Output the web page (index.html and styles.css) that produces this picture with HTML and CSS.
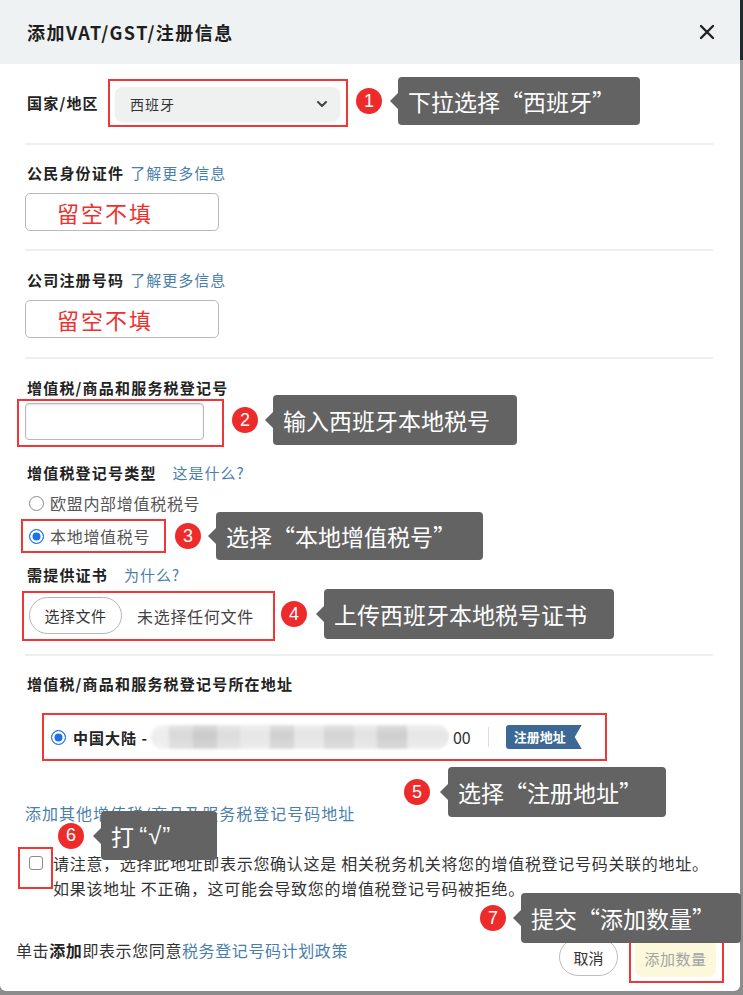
FILE: index.html
```html
<!DOCTYPE html>
<html lang="zh-CN">
<head>
<meta charset="utf-8">
<title>添加VAT/GST/注册信息</title>
<link rel="stylesheet" href="styles.css">
</head>
<body>
<div class="modal">
  <header class="modal-head">
    <h1 class="title">添加VAT/GST/注册信息</h1>
    <svg class="close" viewBox="0 0 16 16" aria-label="关闭"><path d="M2 2 L14 14 M14 2 L2 14" /></svg>
  </header>

  <div class="modal-body">
    <div class="country-row">
      <span class="label country-label">国家/地区</span>
      <div class="mark mark-select">
        <div class="select">
          <span>西班牙</span>
          <svg class="chevron" viewBox="0 0 10 6"><path d="M1 1 L5 5 L9 1" /></svg>
        </div>
      </div>
    </div>

    <div class="divider d1"></div>

    <div class="label-line m18"><span class="label">公民身份证件</span><a class="link near">了解更多信息</a></div>
    <div class="input-box"><span class="hint">留空不填</span></div>

    <div class="divider d2"></div>

    <div class="label-line m19"><span class="label">公司注册号码</span><a class="link near">了解更多信息</a></div>
    <div class="input-box"><span class="hint">留空不填</span></div>

    <div class="divider d3"></div>

    <div class="label-line m19"><span class="label">增值税/商品和服务税登记号</span></div>
    <div class="mark mark-vat"><div class="vat-input"></div></div>

    <div class="label-line m16"><span class="label">增值税登记号类型</span><a class="link far">这是什么?</a></div>
    <div class="radio-row first"><span class="radio"></span><span class="radio-text">欧盟内部增值税税号</span></div>
    <div class="mark mark-radio">
      <div class="radio-row"><span class="radio checked"></span><span class="radio-text">本地增值税号</span></div>
    </div>

    <div class="label-line m12"><span class="label">需提供证书</span><a class="link far">为什么?</a></div>
    <div class="mark mark-file">
      <span class="file-btn">选择文件</span>
      <span class="file-text">未选择任何文件</span>
    </div>

    <div class="divider d4"></div>

    <div class="label-line m18"><span class="label">增值税/商品和服务税登记号所在地址</span></div>
    <div class="mark mark-addr">
      <span class="radio checked"></span>
      <span class="addr-name">中国大陆 -</span>
      <span class="blur"></span>
      <span class="addr-tail">00</span>
      <span class="sep"></span>
      <span class="tag">注册地址</span>
    </div>

    <a class="link add-link">添加其他增值税/商品及服务税登记号码地址</a>

    <div class="notice">
      <span class="checkbox"></span>
      <span class="mark-check"></span>
      <p class="notice-text">请注意，选择此地址即表示您确认这是 相关税务机关将您的增值税登记号码关联的地址。<br>如果该地址 不正确，这可能会导致您的增值税登记号码被拒绝。</p>
    </div>
  </div>

  <footer class="modal-foot">
    <p class="foot-text">单击<b>添加</b>即表示您同意<a class="link foot-link">税务登记号码计划政策</a></p>
    <div class="actions">
      <span class="btn-cancel">取消</span>
      <div class="mark mark-add"><span class="btn-add">添加数量</span></div>
    </div>
  </footer>

  <div class="note n1"><span class="num">1</span><span class="tip">下拉选择“西班牙”</span></div>
  <div class="note n2"><span class="num">2</span><span class="tip">输入西班牙本地税号</span></div>
  <div class="note n3"><span class="num">3</span><span class="tip">选择“本地增值税号”</span></div>
  <div class="note n4"><span class="num">4</span><span class="tip">上传西班牙本地税号证书</span></div>
  <div class="note n5"><span class="num">5</span><span class="tip">选择“注册地址”</span></div>
  <div class="note n6"><span class="num">6</span><span class="tip">打 <span class="latin">“√”</span></span></div>
  <div class="note n7"><span class="num">7</span><span class="tip">提交“添加数量”</span></div>
</div>
</body>
</html>
```

FILE: styles.css
```css
* { box-sizing: border-box; }
html, body { margin: 0; padding: 0; }
body {
  height: 995px;
  overflow: hidden;
  background: linear-gradient(#1f2a2d 0, #1f2a2d 60px, #8c8c8c 60px);
  font-family: "Noto Sans CJK SC", "Noto Sans", sans-serif;
  color: #333;
}
.modal {
  position: relative;
  width: 740px;
  height: 991px;
  background: #fff;
  border-radius: 0 0 6px 6px;
}
.modal-head {
  height: 64px;
  background: #eff2f3;
  display: flex;
  align-items: center;
  justify-content: space-between;
  padding: 0 25px 0 27px;
}
.title {
  margin: 0;
  font-size: 18px;
  font-weight: 700;
  letter-spacing: 1.5px;
  line-height: 24px;
  color: #1e1e1e;
}
.close { width: 16px; height: 16px; }
.close path { stroke: #222; stroke-width: 2.4; stroke-linecap: round; fill: none; }

.modal-body { padding: 15px 27px 0 25px; }

.label {
  font-size: 15px;
  font-weight: 700;
  letter-spacing: 1.2px;
  line-height: 20px;
  color: #222;
}
.link {
  color: #4b7fab;
  font-size: 15px;
  letter-spacing: 1px;
  line-height: 20px;
}
.link.near { margin-left: 6px; }
.link.far { margin-left: 16px; }

.mark { border: 2px solid #f03737; }

.country-row { display: flex; align-items: center; height: 48px; }
.country-label { margin-left: 2px; width: 81px; flex: none; }
.mark-select { padding: 6px 6px 4px 5px; }
.select {
  width: 225px;
  height: 34px;
  border-radius: 8px;
  background: #eff1f1;
  box-shadow: 0 1px 2px rgba(0,0,0,0.08);
  display: flex;
  align-items: center;
  justify-content: space-between;
  padding: 0 13px 0 15px;
  font-size: 14px;
  letter-spacing: 1px;
  color: #333;
}
.chevron { width: 10px; height: 6px; }
.chevron path { stroke: #444; stroke-width: 2; fill: none; stroke-linecap: round; stroke-linejoin: round; }

.divider { height: 2px; background: #edefef; }
.d1 { margin-top: 16px; }
.d2 { margin-top: 18px; }
.d3 { margin-top: 19px; }
.d4 { margin-top: 13px; }

.label-line { display: flex; align-items: center; height: 20px; padding-left: 2px; }
.m12 { margin-top: 12px; }
.m16 { margin-top: 16px; }
.m18 { margin-top: 18px; }
.m19 { margin-top: 19px; }

.input-box {
  margin-top: 10px;
  width: 194px;
  height: 38px;
  border: 1px solid #b9b9b9;
  border-radius: 5px;
  display: flex;
  align-items: center;
  padding-left: 31px;
}
.hint {
  color: #f0302f;
  font-size: 22px;
  letter-spacing: 2px;
  line-height: 26px;
}

.mark-vat {
  width: fit-content;
  margin-top: 1px;
  margin-left: -8px;
  padding: 2px 18px 5px 6px;
}
.vat-input {
  width: 179px;
  height: 37px;
  border: 1px solid #b9b9b9;
  border-radius: 4px;
  box-shadow: inset 0 1px 2px rgba(0,0,0,0.12);
}

.radio-row { display: flex; align-items: center; gap: 6px; height: 26px; }
.radio-row.first { margin-top: 7px; margin-left: 4px; }
.radio {
  width: 15px;
  height: 15px;
  border-radius: 50%;
  border: 1.5px solid #8a8a8a;
  background: #fff;
  flex: none;
}
.radio.checked {
  border: 1.5px solid #1a73e8;
  background: #1a73e8;
  box-shadow: inset 0 0 0 2.5px #fff;
}
.radio-text { font-size: 16px; letter-spacing: 0.7px; color: #555; line-height: 22px; }

.mark-radio {
  width: fit-content;
  margin-top: 3px;
  margin-left: -4px;
  padding: 2px 14px 2px 6px;
}

.mark-file {
  display: flex;
  align-items: center;
  width: fit-content;
  margin-top: 6px;
  margin-left: -3px;
  padding: 4px 19px 5px 5px;
}
.file-btn {
  width: 93px;
  height: 37px;
  border: 1px solid #b5b5b5;
  border-radius: 19px;
  display: flex;
  align-items: center;
  justify-content: center;
  font-size: 15px;
  letter-spacing: 0.5px;
  color: #333;
}
.file-text { margin-left: 15px; font-size: 16px; letter-spacing: 0.7px; color: #444; }

.mark-addr {
  display: flex;
  align-items: center;
  width: 565px;
  height: 48px;
  margin-top: 19px;
  margin-left: 17px;
  padding-left: 7px;
}
.addr-name { margin-left: 7px; font-size: 15px; font-weight: 700; letter-spacing: 1px; color: #222; }
.blur {
  margin-left: 3px;
  width: 298px;
  height: 24px;
  border-radius: 12px;
  background:
    linear-gradient(180deg, rgba(255,255,255,0.35) 0, rgba(255,255,255,0) 40%, rgba(255,255,255,0.25) 100%),
    linear-gradient(90deg, #ececec 0 6%, #d8d8d8 6% 14%, #c9c9c9 14% 22%, #dcdcdc 22% 30%, #e6e6e6 30% 40%, #cfcfcf 40% 48%, #e4e4e4 48% 58%, #d3d3d3 58% 68%, #e2e2e2 68% 76%, #cdcdcd 76% 86%, #e6e6e6 86% 100%);
  filter: blur(1.5px);
}
.addr-tail { margin-left: 4px; font-size: 16px; color: #333; }
.sep { margin-left: 17px; width: 1px; height: 20px; background: #dcdcdc; }
.tag {
  margin-left: 17px;
  width: 76px;
  height: 24px;
  background: #3c6895;
  color: #fff;
  font-size: 13px;
  font-weight: 700;
  line-height: 24px;
  padding-left: 8px;
  border-radius: 3px 0 0 3px;
  clip-path: polygon(0 0, 100% 0, calc(100% - 7px) 50%, 100% 100%, 0 100%);
}

.add-link {
  display: block;
  margin-top: 42px;
  font-size: 16px;
  letter-spacing: 1px;
}

.notice { position: relative; display: flex; margin-top: 28px; }
.checkbox {
  flex: none;
  width: 14px;
  height: 14px;
  margin: 5px 0 0 4px;
  border: 1.5px solid #8b8b8b;
  border-radius: 3px;
}
.mark-check {
  position: absolute;
  left: -7px;
  top: -4px;
  width: 35px;
  height: 42px;
  border: 2px solid #f03737;
}
.notice-text {
  margin: 0 0 0 10px;
  font-size: 16px;
  letter-spacing: 0.7px;
  line-height: 25px;
  color: #333;
  white-space: nowrap;
}

.modal-foot {
  display: flex;
  justify-content: space-between;
  align-items: flex-start;
  margin-top: 34px;
  padding: 0 16px 0 16px;
}
.foot-text {
  margin: 5px 0 0;
  font-size: 16px;
  letter-spacing: 0.6px;
  line-height: 20px;
  color: #333;
}
.foot-text b { font-weight: 700; color: #222; }
.foot-link { font-size: 16px; letter-spacing: 0.6px; }
.actions { display: flex; align-items: flex-start; }
.btn-cancel {
  margin-top: 3px;
  width: 59px;
  height: 38px;
  border: 1px solid #bdbdbd;
  border-radius: 19px;
  display: flex;
  align-items: center;
  justify-content: center;
  font-size: 15px;
  color: #333;
}
.mark-add { margin-left: 11px; padding: 2px 6px 4px 4px; }
.btn-add {
  width: 81px;
  height: 38px;
  background: #fbf8dc;
  border-radius: 8px;
  display: flex;
  align-items: center;
  justify-content: center;
  font-size: 15px;
  letter-spacing: 0.5px;
  color: #a3a3a3;
}

/* annotation callouts */
.note { position: absolute; display: flex; align-items: center; }
.num {
  flex: none;
  width: 26px;
  height: 26px;
  border-radius: 50%;
  background: #ee2b2b;
  color: #fff;
  font-family: "Liberation Sans", sans-serif;
  font-size: 18px;
  display: flex;
  align-items: center;
  justify-content: center;
}
.tip {
  position: relative;
  height: 100%;
  background: #636363;
  color: #fff;
  border-radius: 4px;
  font-size: 23px;
  display: flex;
  align-items: center;
  padding-left: 10px;
  white-space: pre;
}
.tip::before {
  content: "";
  position: absolute;
  left: -8px;
  top: 50%;
  margin-top: -8px;
  border-style: solid;
  border-width: 8px 8px 8px 0;
  border-color: transparent #636363 transparent transparent;
}
.tip .latin { font-family: "Liberation Sans", sans-serif; font-size: 24px; letter-spacing: 1px; }
.n1 { left: 356px; top: 77px; height: 48px; }
.n1 .tip { margin-left: 16px; width: 242px; }
.n2 { left: 232px; top: 395px; height: 50px; }
.n2 .tip { margin-left: 15px; width: 244px; }
.n3 { left: 175px; top: 512px; height: 48px; }
.n3 .tip { margin-left: 15px; width: 267px; }
.n4 { left: 281px; top: 589px; height: 50px; }
.n4 .tip { margin-left: 17px; width: 290px; }
.n5 { left: 404px; top: 767px; height: 50px; }
.n5 .tip { margin-left: 18px; width: 218px; }
.n6 { left: 58px; top: 811px; height: 49px; }
.n6 .tip { margin-left: 17px; width: 116px; }
.n7 { left: 480px; top: 893px; height: 50px; }
.n7 .tip { margin-left: 15px; width: 220px; }
```
